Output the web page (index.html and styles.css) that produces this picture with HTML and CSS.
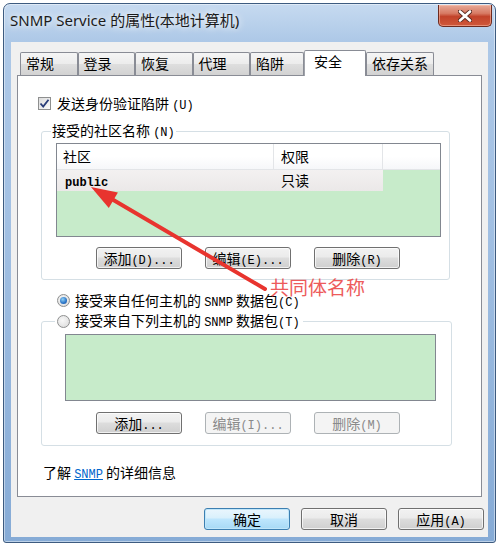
FILE: index.html
```html
<!DOCTYPE html>
<html lang="zh-CN">
<head>
  <meta charset="UTF-8" />
  <title>SNMP Service 的属性(本地计算机)</title>
  <link rel="stylesheet" href="styles.css">
</head>
<body>
  <div class="window">
    <div class="titlebar">
      <span class="title">SNMP Service 的属性(本地计算机)</span>
      <button class="close">
        <svg width="14" height="12" viewBox="0 0 14 12">
          <path d="M2 1.5 L12 10.5 M12 1.5 L2 10.5" stroke="#5a2a20" stroke-width="4.4" stroke-linecap="round"/>
          <path d="M2 1.5 L12 10.5 M12 1.5 L2 10.5" stroke="#fff" stroke-width="2.6" stroke-linecap="round"/>
        </svg>
      </button>
    </div>

    <div class="client">
      <div class="tabs">
        <div class="tab">常规</div>
        <div class="tab">登录</div>
        <div class="tab">恢复</div>
        <div class="tab">代理</div>
        <div class="tab narrow">陷阱</div>
        <div class="tab active">安全</div>
        <div class="tab">依存关系</div>
      </div>

      <div class="panel">
        <label class="check">
          <span class="checkbox">
            <svg width="11" height="11" viewBox="0 0 11 11">
              <path d="M1.5 5.5 L4.2 8.6 L9.5 1.8" fill="none" stroke="#283c78" stroke-width="1.8"/>
            </svg>
          </span>
          <span>发送身份验证陷阱 <span class="en">(U)</span></span>
        </label>

        <fieldset class="group community">
          <legend>接受的社区名称 <span class="en">(N)</span></legend>
          <div class="list">
            <div class="list-head">
              <div class="col c1">社区</div>
              <div class="col c2">权限</div>
              <div class="col c3"></div>
            </div>
            <div class="list-row">
              <div class="col c1"><span class="en b">public</span></div>
              <div class="col c2">只读</div>
            </div>
          </div>
          <div class="btns">
            <button class="btn">添加<span class="en">(D)...</span></button>
            <button class="btn">编辑<span class="en">(E)...</span></button>
            <button class="btn">删除<span class="en">(R)</span></button>
          </div>
        </fieldset>

        <label class="radio-row first">
          <span class="radio on"></span>
          <span>接受来自任何主机的 <span class="en">SNMP</span> 数据包<span class="en">(C)</span></span>
        </label>

        <fieldset class="group hosts">
          <legend>
            <label class="radio-row">
              <span class="radio"></span>
              <span>接受来自下列主机的 <span class="en">SNMP</span> 数据包<span class="en">(T)</span></span>
            </label>
          </legend>
          <div class="hosts-list"></div>
          <div class="btns">
            <button class="btn">添加<span class="en">...</span></button>
            <button class="btn" disabled>编辑<span class="en">(I)...</span></button>
            <button class="btn" disabled>删除<span class="en">(M)</span></button>
          </div>
        </fieldset>

        <p class="more">了解 <a href="#" class="en">SNMP</a> 的详细信息</p>
      </div>

      <div class="actions">
        <button class="btn default">确定</button>
        <button class="btn">取消</button>
        <button class="btn">应用<span class="en">(A)</span></button>
      </div>
    </div>
  </div>

  <!-- annotation drawn over the dialog -->
  <svg class="arrow" width="499" height="546" viewBox="0 0 499 546">
    <line x1="110" y1="198" x2="265" y2="289" stroke="#e8342e" stroke-width="4" stroke-linecap="round"/>
    <polygon points="91,187 108.8,208 117.9,192.4" fill="#e8342e"/>
  </svg>
  <div class="note">共同体名称</div>
</body>
</html>
```

FILE: styles.css
```css
* {
  margin: 0;
  padding: 0;
  box-sizing: border-box;
}

body {
  width: 499px;
  height: 546px;
  position: relative;
  overflow: hidden;
  background: #fff;
  font-family: "Noto Sans CJK SC", "Noto Sans", sans-serif;
  font-size: 14px;
  color: #000;
}

.en {
  font-family: "Liberation Mono", monospace;
  font-size: 12px;
}

.b {
  font-weight: bold;
}

.window {
  margin: 3px 3px 0;
  height: 540px;
  display: flex;
  flex-direction: column;
  border: 1px solid #3d5b80;
  border-radius: 7px 7px 3px 3px;
  background: linear-gradient(180deg, #c6daf0 0%, #adc8e7 7%, #a2c0e3 40%, #86abd6 100%);
  box-shadow: inset 0 0 0 1px rgba(255, 255, 255, 0.45);
}

.titlebar {
  height: 38px;
  display: flex;
  justify-content: space-between;
  align-items: flex-start;
}

.title {
  margin: 6px 0 0 6px;
  font-family: "Noto Sans", "Noto Sans CJK SC", sans-serif;
  font-size: 15px;
  line-height: 20px;
  color: #1b1b1b;
  text-shadow: 0 0 6px rgba(255, 255, 255, 0.9), 0 0 10px rgba(255, 255, 255, 0.7);
}

.close {
  margin: 1px 3px 0 0;
  width: 54px;
  height: 22px;
  border: 1px solid #6d2a1f;
  border-top: none;
  border-radius: 0 0 5px 5px;
  background: linear-gradient(180deg, #e8a998 0%, #d77a63 40%, #c2432a 55%, #d0583a 100%);
  box-shadow: inset 0 0 0 1px rgba(255, 200, 180, 0.5);
  display: flex;
  justify-content: center;
  align-items: center;
}

.client {
  flex: 1;
  margin: 0 7px 5px;
  padding: 8px 6px 7px;
  background: #f0f0f0;
}

/* tabs */
.tabs {
  display: flex;
  align-items: flex-end;
  height: 25px;
  padding-left: 3px;
}

.tab {
  height: 23px;
  min-width: 57.5px;
  padding: 0 5px;
  line-height: 21px;
  border: 1px solid #898c95;
  border-bottom: none;
  border-radius: 2px 2px 0 0;
  background: linear-gradient(180deg, #f5f5f5 0%, #ececec 50%, #dedede 52%, #d2d2d2 100%);
}

.tab.narrow {
  min-width: 54px;
}

.tab.active {
  position: relative;
  z-index: 1;
  height: 26px;
  width: 62px;
  padding: 0 9px;
  line-height: 21px;
  margin-bottom: -1px;
  border-left-color: #a0a3aa;
  background: #fff;
}

.panel {
  height: 422px;
  border: 1px solid #898c95;
  background: #fff;
}

/* checkbox / radio */
.check {
  display: flex;
  align-items: center;
  gap: 6px;
  height: 20px;
  margin: 17px 0 0 20px;
}

.checkbox {
  width: 13px;
  height: 13px;
  border: 1px solid #8e8f8f;
  background: linear-gradient(135deg, #dcdcdc, #fafafa);
  display: flex;
  justify-content: center;
  align-items: center;
}

.radio-row {
  display: flex;
  align-items: center;
  gap: 5px;
  height: 20px;
}

.radio-row.first {
  margin: 10px 0 0 39px;
}

.radio {
  width: 13px;
  height: 13px;
  border: 1px solid #8e8f8f;
  border-radius: 50%;
  background: radial-gradient(circle at 40% 40%, #f8f8f8, #d8d8d8);
  display: flex;
  justify-content: center;
  align-items: center;
}

.radio.on::after {
  content: "";
  width: 7px;
  height: 7px;
  border-radius: 50%;
  background: radial-gradient(circle at 40% 35%, #8fd0f5, #2a73c6 60%, #1a4f9a);
}

/* group boxes */
.group {
  margin-left: 23px;
  border: 1px solid #d5dfe5;
  border-radius: 3px;
  padding: 0 9px 10px;
  min-inline-size: 0;
}

.group legend {
  line-height: 20px;
  padding: 0 1px;
}

.community {
  margin-top: 7px;
  width: 409px;
}

.hosts {
  margin-top: 1px;
  width: 411px;
  padding-bottom: 11px;
}

.hosts legend {
  margin-left: 4px;
  padding: 0 3px 0 2px;
}

.list {
  margin-left: 5px;
  width: 385px;
  height: 94px;
  border: 1px solid #828790;
  background: #c7ebca;
}

.list-head {
  display: flex;
  height: 26px;
  background: linear-gradient(180deg, #ffffff 0%, #ffffff 50%, #f6f7f9 100%);
  border-bottom: 1px solid #e3e5e8;
}

.list-head .col {
  line-height: 25px;
  border-right: 1px solid #e3e5e8;
}

.list-row {
  display: flex;
  height: 21px;
}

.list-row .col {
  line-height: 21px;
  background: linear-gradient(180deg, #f3f1f1, #ebe8e8);
}

.col.c1 {
  width: 217px;
  padding-left: 6px;
}

.list-row .col.c1 {
  padding-left: 8px;
}

.col.c2 {
  width: 109px;
  padding-left: 7px;
}

.col.c3 {
  flex: 1;
  border-right: none;
}

.hosts-list {
  margin: 3px 0 0 14px;
  width: 371px;
  height: 67px;
  border: 1px solid #828790;
  background: #c7ebca;
}

/* buttons */
.btns {
  display: flex;
  gap: 23px;
  margin: 10px 0 0 45px;
}

.hosts .btns {
  margin-top: 11px;
}

.btn {
  width: 86px;
  height: 22px;
  border: 1px solid #707070;
  border-radius: 3px;
  background: linear-gradient(180deg, #f2f2f2 0%, #ebebeb 45%, #dddddd 50%, #cfcfcf 100%);
  box-shadow: inset 0 0 0 1px rgba(255, 255, 255, 0.7);
  font-family: inherit;
  font-size: 14px;
  line-height: 20px;
  color: #000;
  text-align: center;
}

.btn:disabled {
  border-color: #adb2b5;
  background: #f4f4f4;
  box-shadow: none;
  color: #8a8a8a;
}

.btn.default {
  border-color: #3c7fb1;
  background: linear-gradient(180deg, #eaf6fd 0%, #d9f0fc 45%, #bee6fd 50%, #a7d9f5 100%);
  box-shadow: inset 0 0 0 1px #c0e6fa;
}

.more {
  margin: 16px 0 0 25px;
  line-height: 20px;
}

.more a {
  color: #0066cc;
  text-decoration: underline;
}

.actions {
  display: flex;
  justify-content: flex-end;
  gap: 11px;
  margin: 11px -2px 0 0;
}

/* red annotation */
.arrow {
  position: absolute;
  left: 0;
  top: 0;
  pointer-events: none;
}

.note {
  position: absolute;
  left: 270px;
  top: 276px;
  font-size: 19px;
  line-height: 22px;
  color: #ec4a4a;
  opacity: 0.9;
}
```
